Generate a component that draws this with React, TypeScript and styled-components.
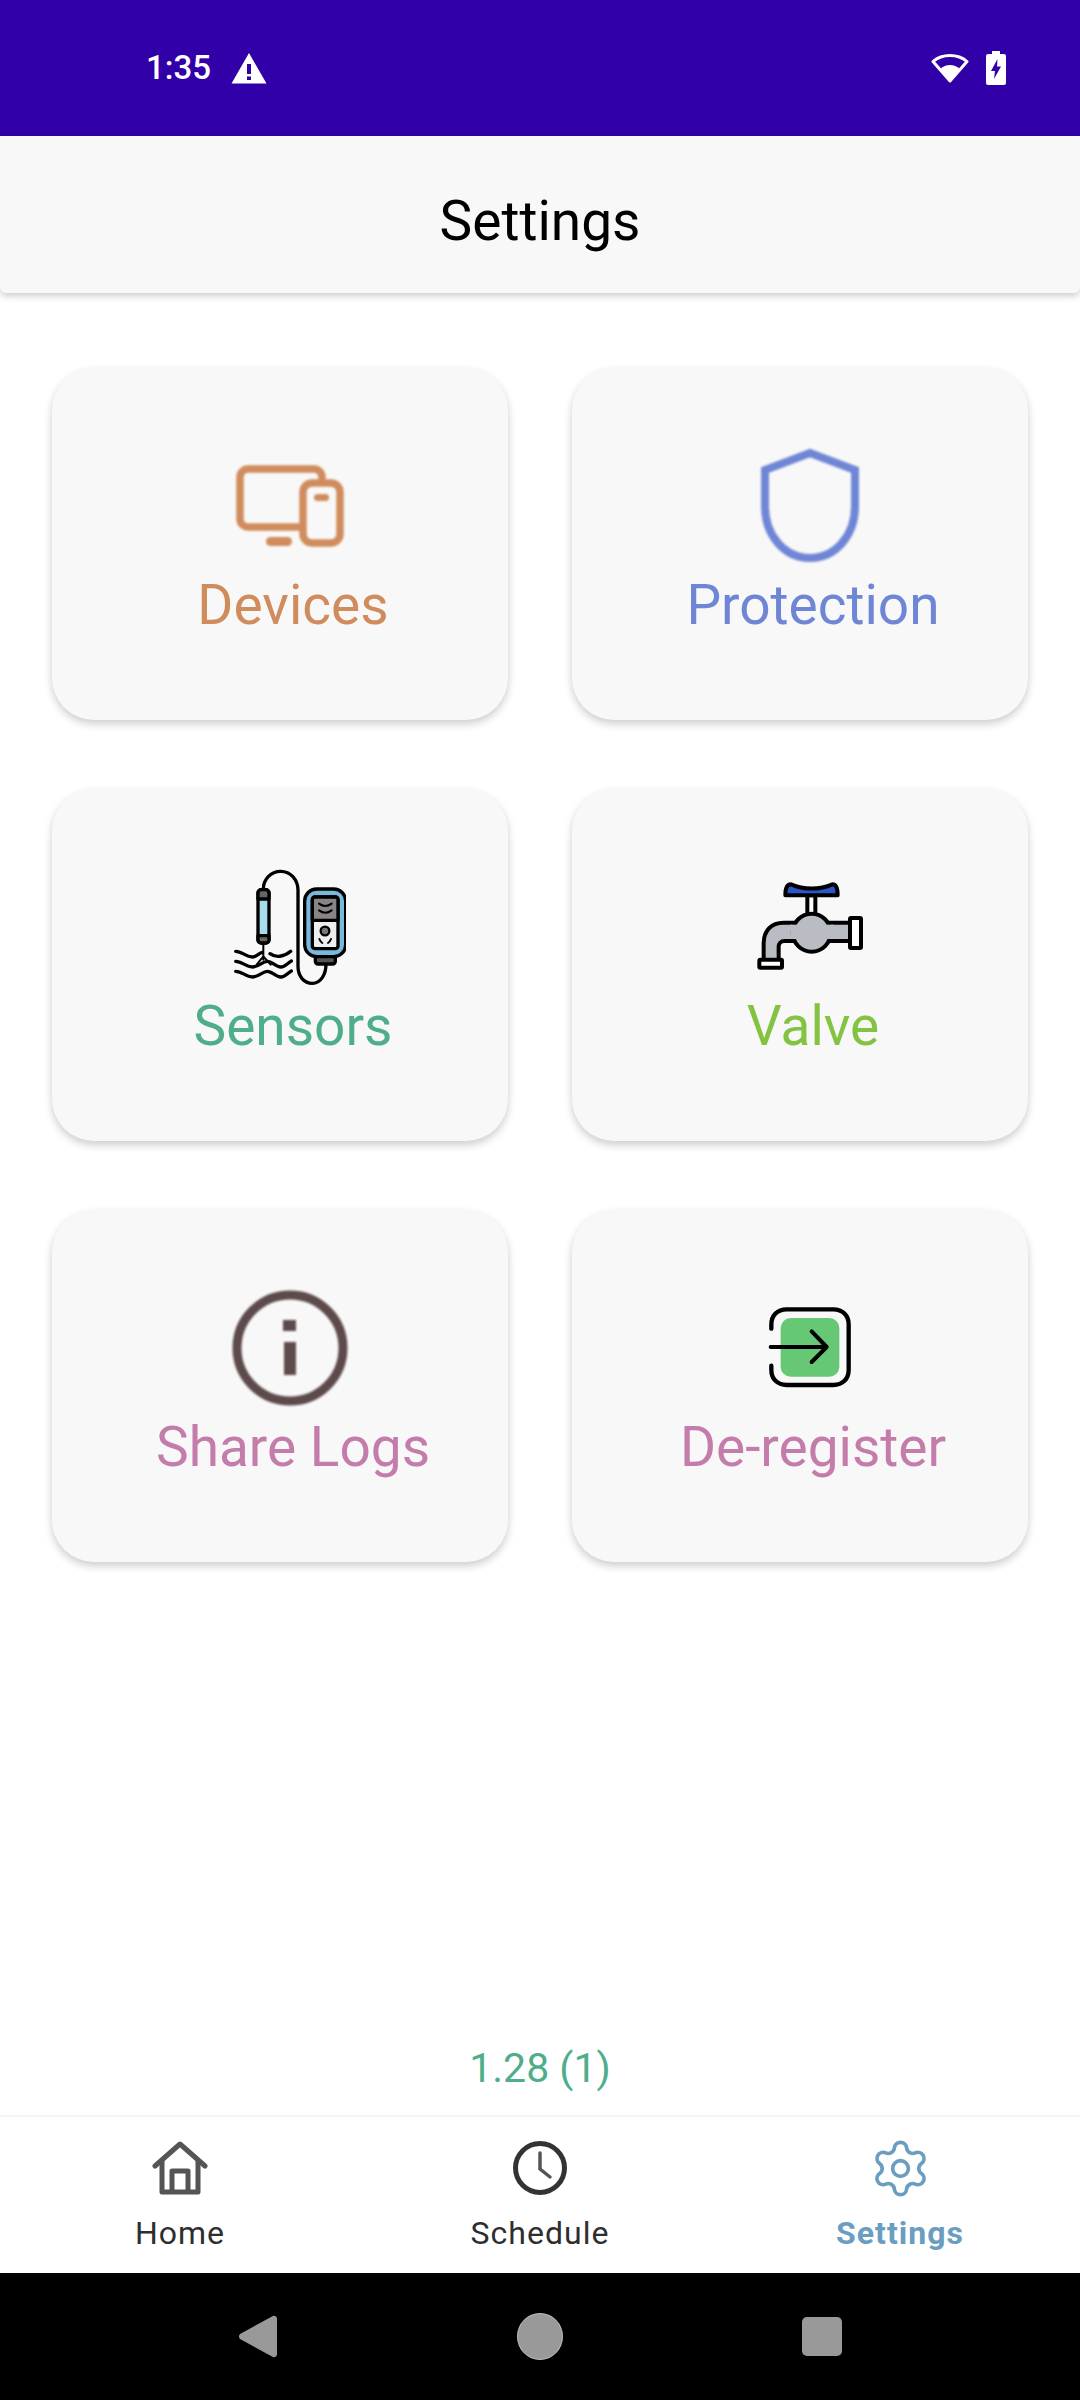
import React from "react";
import styled, { createGlobalStyle } from "styled-components";
import { Settings as GearIcon } from "lucide-react";

const Global = createGlobalStyle`
  html, body { margin: 0; padding: 0; background: #fff; }
  * { box-sizing: border-box; }
`;

const Screen = styled.div`
  width: 1080px;
  height: 2400px;
  display: flex;
  flex-direction: column;
  background: #fff;
  font-family: Roboto, "Liberation Sans", sans-serif;
`;

const StatusBar = styled.div`
  height: 136px;
  flex: none;
  background: #3100a9;
  display: flex;
  align-items: center;
  justify-content: space-between;
  padding: 0 74px 0 146px;
  color: #fff;
`;

const StatusGroup = styled.div<{ $gap: number }>`
  display: flex;
  align-items: center;
  gap: ${(p) => p.$gap}px;
`;

const Clock = styled.span`
  font-size: 33px;
  font-weight: 500;
  line-height: 40px;
`;

const Header = styled.header`
  height: 157px;
  flex: none;
  background: #f8f8f8;
  border-radius: 6px;
  box-shadow: 0 3px 7px rgba(0, 0, 0, 0.2);
  display: flex;
  align-items: center;
  justify-content: center;
  padding-top: 12px;
  font-size: 55px;
  color: #000;
  position: relative;
`;

const Body = styled.main`
  flex: 1;
  display: flex;
  flex-direction: column;
  padding: 75px 52px 0;
  min-height: 0;
`;

const Grid = styled.div`
  display: grid;
  grid-template-columns: 456px 456px;
  grid-auto-rows: 352px;
  column-gap: 64px;
  row-gap: 69px;
`;

const Card = styled.div`
  background: #f8f8f8;
  border-radius: 42px;
  box-shadow: 0 4px 9px rgba(0, 0, 0, 0.2);
  display: flex;
  flex-direction: column;
  align-items: center;
  padding: 67px 0 0 20px;
`;

const IconSlot = styled.div`
  height: 142px;
  display: flex;
  align-items: center;
  justify-content: center;
`;

const CardLabel = styled.div<{ $color: string }>`
  font-size: 55px;
  line-height: 56px;
  padding-left: 6px;
  color: ${(p) => p.$color};
`;

const SoftIcon = styled.svg`
  filter: blur(1px);
`;

const Version = styled.div`
  margin-top: auto;
  height: 78px;
  text-align: center;
  font-size: 41px;
  line-height: 62px;
  color: #4fae8a;
`;

const TabBar = styled.nav`
  height: 158px;
  flex: none;
  background: #fff;
  border-top: 2px solid #f3f3f3;
  display: grid;
  grid-template-columns: repeat(3, 360px);
`;

const Tab = styled.div`
  display: flex;
  flex-direction: column;
  align-items: center;
  padding-top: 21px;
`;

const TabIcon = styled.div`
  height: 60px;
  display: flex;
  align-items: center;
  justify-content: center;
`;

const TabLabel = styled.span<{ $active?: boolean }>`
  margin-top: 16px;
  font-size: 32px;
  line-height: 38px;
  letter-spacing: 1px;
  font-weight: ${(p) => (p.$active ? 700 : 400)};
  color: ${(p) => (p.$active ? "#6a9dc0" : "#2e2e2e")};
`;

const SystemNav = styled.div`
  height: 127px;
  flex: none;
  background: #000;
  display: grid;
  grid-template-columns: repeat(3, 360px);
  align-items: center;
  justify-items: center;
`;

const BackKey = styled.svg`
  margin-left: 156px;
`;

const HomeKey = styled.div`
  width: 46px;
  height: 47px;
  border-radius: 50%;
  background: #999;
  border: 1px solid #bbb;
`;

const RecentKey = styled.div`
  width: 40px;
  height: 39px;
  border-radius: 5px;
  background: #999;
  margin-right: 156px;
`;

const DevicesIcon = () => (
  <SoftIcon width="108" height="82" viewBox="0 0 108 82" fill="none">
    <path d="M64 62H12a8 8 0 0 1-8-8V12a8 8 0 0 1 8-8h66a8 8 0 0 1 8 8v4" stroke="#d08c5c" strokeWidth="7.5" />
    <rect x="67" y="18" width="37" height="60" rx="9" stroke="#d08c5c" strokeWidth="7.5" fill="#f8f8f8" />
    <rect x="78" y="29" width="15" height="7" rx="3.5" fill="#d08c5c" />
    <rect x="30" y="72" width="26" height="9" rx="4.5" fill="#d08c5c" />
  </SoftIcon>
);

const ShieldIcon = () => (
  <SoftIcon width="98" height="116" viewBox="0 0 98 116" fill="none">
    <path d="M49 5 L94 22 V58 C94 88 74 110 49 110 C24 110 4 88 4 58 V22 Z" stroke="#6f86d6" strokeWidth="8" />
  </SoftIcon>
);

const SensorIcon = () => (
  <svg width="112" height="116" viewBox="40 28 336 348" fill="none" stroke="#000" strokeWidth="10" strokeLinecap="round" strokeLinejoin="round">
    <path d="M128 88C128 60 150 35 180 35C210 35 232 60 232 92V320C232 350 250 371 275 371C300 371 316 345 316 312" />
    <path d="M128 250V300M128 290L108 315M128 290L150 315" strokeWidth="6" />
    <rect x="112" y="90" width="33" height="160" rx="10" fill="#a6dcec" />
    <path d="M112 118V100a10 10 0 0 1 10-10h13a10 10 0 0 1 10 10v18Z" fill="#666" />
    <path d="M112 228V240a10 10 0 0 0 10 10h13a10 10 0 0 0 10-10v-12Z" fill="#666" />
    <path d="M45 275C65 275 75 292 95 292C108 292 115 280 125 278M148 282C165 295 190 292 210 275" />
    <path d="M45 305C65 305 75 322 95 322C115 322 125 305 140 305C155 305 165 322 180 322C195 322 200 310 212 304" />
    <path d="M45 335C65 335 75 352 95 352C115 352 125 335 140 335C155 335 165 352 180 352C195 352 200 340 212 334" />
    <rect x="284" y="285" width="60" height="28" rx="8" fill="#555" />
    <rect x="252" y="88" width="123" height="203" rx="36" fill="#78b9dc" />
    <rect x="275" y="112" width="77" height="155" rx="8" fill="#eee" />
    <path d="M275 182V120a8 8 0 0 1 8-8h61a8 8 0 0 1 8 8v62Z" fill="#8a8487" />
    <path d="M295 132Q314 146 333 132M295 152Q314 166 333 152" strokeWidth="6" />
    <circle cx="313" cy="214" r="13" fill="#777" strokeWidth="7" />
    <path d="M296 238Q299 246 305 250M331 238Q328 246 322 250" strokeWidth="6" />
  </svg>
);

const ValveIcon = () => (
  <svg width="106" height="90" viewBox="50 38 318 270" fill="none" stroke="#000" strokeWidth="12" strokeLinejoin="round">
    <rect x="201" y="78" width="24" height="60" fill="#fff" />
    <path d="M135 78C135 58 140 45 152 45C190 62 238 62 276 45C288 45 292 58 292 78Z" fill="#2b55c8" />
    <path d="M335 160H130C92 160 70 185 70 222V275H115V232C115 222 122 215 132 215H335Z" fill="#b9bcc2" />
    <circle cx="214" cy="190" r="57" fill="#b9bcc2" />
    {/* hides the seams where the ball meets the pipe */}
    <rect x="150" y="166" width="130" height="43" fill="#b9bcc2" stroke="none" />
    <rect x="329" y="146" width="33" height="90" rx="3" fill="#fff" />
    <rect x="57" y="271" width="68" height="24" rx="3" fill="#fff" />
  </svg>
);

const InfoIcon = () => (
  <SoftIcon width="116" height="116" viewBox="0 0 116 116" fill="none">
    <circle cx="58" cy="58" r="53" stroke="#5d4a4a" strokeWidth="9" />
    <rect x="51" y="30" width="13" height="11" fill="#5d4a4a" />
    <rect x="52" y="52" width="12" height="33" fill="#5d4a4a" />
  </SoftIcon>
);

const ExitIcon = () => (
  <svg width="84" height="84" viewBox="54 54 252 252" fill="none">
    <rect x="92" y="90" width="176" height="176" rx="30" fill="#66c774" />
    <path d="M64 122V110C64 82 82 64 110 64H250C278 64 296 82 296 110V245C296 273 278 291 250 291H110C82 291 64 273 64 245V233" stroke="#000" strokeWidth="13" strokeLinecap="round" />
    <path d="M62 177H228M185 130L230 177L185 222" stroke="#000" strokeWidth="12" strokeLinecap="round" strokeLinejoin="round" />
  </svg>
);

const items = [
  { label: "Devices", color: "#d08c5c", icon: <DevicesIcon /> },
  { label: "Protection", color: "#6f86d6", icon: <ShieldIcon /> },
  { label: "Sensors", color: "#4fae8a", icon: <SensorIcon /> },
  { label: "Valve", color: "#84c341", icon: <ValveIcon /> },
  { label: "Share Logs", color: "#c47cab", icon: <InfoIcon /> },
  { label: "De-register", color: "#c47cab", icon: <ExitIcon /> },
];

export default function App() {
  return (
    <Screen>
      <Global />
      <StatusBar>
        <StatusGroup $gap={20}>
          <Clock>1:35</Clock>
          <svg width="36" height="32" viewBox="0 0 36 32">
            <path fillRule="evenodd" fill="#fff" d="M18 1L35.5 31.5H.5ZM16 12V22H20V12ZM16 24.500V28H20V24.500Z" />
          </svg>
        </StatusGroup>
        <StatusGroup $gap={17}>
          <svg width="38" height="32" viewBox="0 0 38 32" fill="none">
            <path d="M2 9.500C11 1.500 27 1.500 36 9.500L19 29Z" stroke="#fff" strokeWidth="3" strokeLinejoin="round" />
            <path d="M9.500 17C14 11.500 24 11.500 28.500 17L19 30Z" fill="#fff" />
          </svg>
          <svg width="20" height="34" viewBox="0 0 20 34">
            <path fillRule="evenodd" fill="#fff" d="M6 0H14V3H18a2 2 0 0 1 2 2V32a2 2 0 0 1-2 2H2a2 2 0 0 1-2-2V5a2 2 0 0 1 2-2H6ZM11.500 8L5 20H9L8 28L15 15.500H11Z" />
          </svg>
        </StatusGroup>
      </StatusBar>
      <Header>Settings</Header>
      <Body>
        <Grid>
          {items.map((item) => (
            <Card key={item.label}>
              <IconSlot>{item.icon}</IconSlot>
              <CardLabel $color={item.color}>{item.label}</CardLabel>
            </Card>
          ))}
        </Grid>
        <Version>1.28 (1)</Version>
      </Body>
      <TabBar>
        <Tab>
          <TabIcon>
            <svg width="56" height="56" viewBox="0 0 56 56" fill="none" stroke="#555" strokeWidth="5" strokeLinejoin="round">
              <path d="M3 26L28 4L53 26" strokeLinecap="round" />
              <path d="M10 21V52H46V21" />
              <path d="M20 52V31H36V52" />
            </svg>
          </TabIcon>
          <TabLabel>Home</TabLabel>
        </Tab>
        <Tab>
          <TabIcon>
            <svg width="56" height="56" viewBox="0 0 56 56" fill="none" stroke="#333" strokeLinecap="round">
              <circle cx="28" cy="28" r="24.500" strokeWidth="5" />
              <path d="M28 13V29L38 37" strokeWidth="3.500" stroke="#555" />
            </svg>
          </TabIcon>
          <TabLabel>Schedule</TabLabel>
        </Tab>
        <Tab>
          <TabIcon>
            <GearIcon size={63} color="#6a9dc0" strokeWidth={1.4} />
          </TabIcon>
          <TabLabel $active>Settings</TabLabel>
        </Tab>
      </TabBar>
      <SystemNav>
        <BackKey width="40" height="45" viewBox="0 0 40 45">
          <path d="M34 2.500a3 3 0 0 1 5 2V40.500a3 3 0 0 1-5 2L2 25a4 4 0 0 1 0-5Z" fill="#999" />
        </BackKey>
        <HomeKey />
        <RecentKey />
      </SystemNav>
    </Screen>
  );
}
